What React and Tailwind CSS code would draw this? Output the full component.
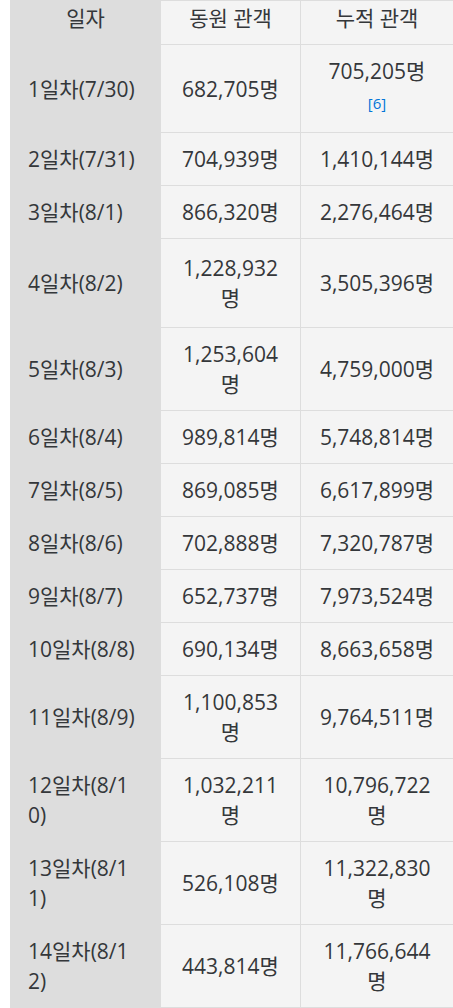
const rows = [
  { day: '1일차(7/30)', daily: '682,705명', total: '705,205명', note: '[6]' },
  { day: '2일차(7/31)', daily: '704,939명', total: '1,410,144명' },
  { day: '3일차(8/1)', daily: '866,320명', total: '2,276,464명' },
  { day: '4일차(8/2)', daily: '1,228,932명', total: '3,505,396명', tall: true },
  { day: '5일차(8/3)', daily: '1,253,604명', total: '4,759,000명' },
  { day: '6일차(8/4)', daily: '989,814명', total: '5,748,814명' },
  { day: '7일차(8/5)', daily: '869,085명', total: '6,617,899명' },
  { day: '8일차(8/6)', daily: '702,888명', total: '7,320,787명' },
  { day: '9일차(8/7)', daily: '652,737명', total: '7,973,524명' },
  { day: '10일차(8/8)', daily: '690,134명', total: '8,663,658명' },
  { day: '11일차(8/9)', daily: '1,100,853명', total: '9,764,511명' },
  { day: '12일차(8/10)', daily: '1,032,211명', total: '10,796,722명' },
  { day: '13일차(8/11)', daily: '526,108명', total: '11,322,830명' },
  { day: '14일차(8/12)', daily: '443,814명', total: '11,766,644명' },
];

export default function App() {
  return (
    <div className="w-[453px] h-[1008px] overflow-hidden bg-white pl-[10px] font-['Open_Sans','Noto_Sans_CJK_KR',sans-serif] text-[21px] leading-[30px] text-[#34373a]">
      <table className="w-[443px] table-fixed border-collapse">
        <colgroup>
          <col className="w-[150px]" />
          <col className="w-[140px]" />
          <col className="w-[153px]" />
        </colgroup>
        <thead>
          <tr>
            <th className="border border-[#dddddd] bg-[#dddddd] px-[17px] pt-[2px] pb-[11px] font-normal text-center">일자</th>
            <th className="border border-[#dddddd] bg-[#f4f4f4] px-[17px] pt-[2px] pb-[11px] font-normal text-center">동원 관객</th>
            <th className="border border-[#dddddd] bg-[#f4f4f4] px-[17px] pt-[2px] pb-[11px] font-normal text-center">누적 관객</th>
          </tr>
        </thead>
        <tbody>
          {rows.map((r) => {
            const pad = r.tall ? 'py-[14px]' : 'py-[11px]';
            return (
              <tr key={r.day}>
                <td className={`border border-[#dddddd] bg-[#dddddd] px-[17px] ${pad} break-all align-middle`}>{r.day}</td>
                <td className={`border border-[#dddddd] bg-[#f4f4f4] px-[17px] ${pad} break-all text-center align-middle`}>{r.daily}</td>
                <td className={`border border-[#dddddd] bg-[#f4f4f4] px-[17px] ${pad} break-all text-center align-middle`}>
                  {r.total}
                  {r.note && (
                    <a className="block text-[15px] leading-[35px] text-[#0275d8]">{r.note}</a>
                  )}
                </td>
              </tr>
            );
          })}
        </tbody>
      </table>
    </div>
  );
}
